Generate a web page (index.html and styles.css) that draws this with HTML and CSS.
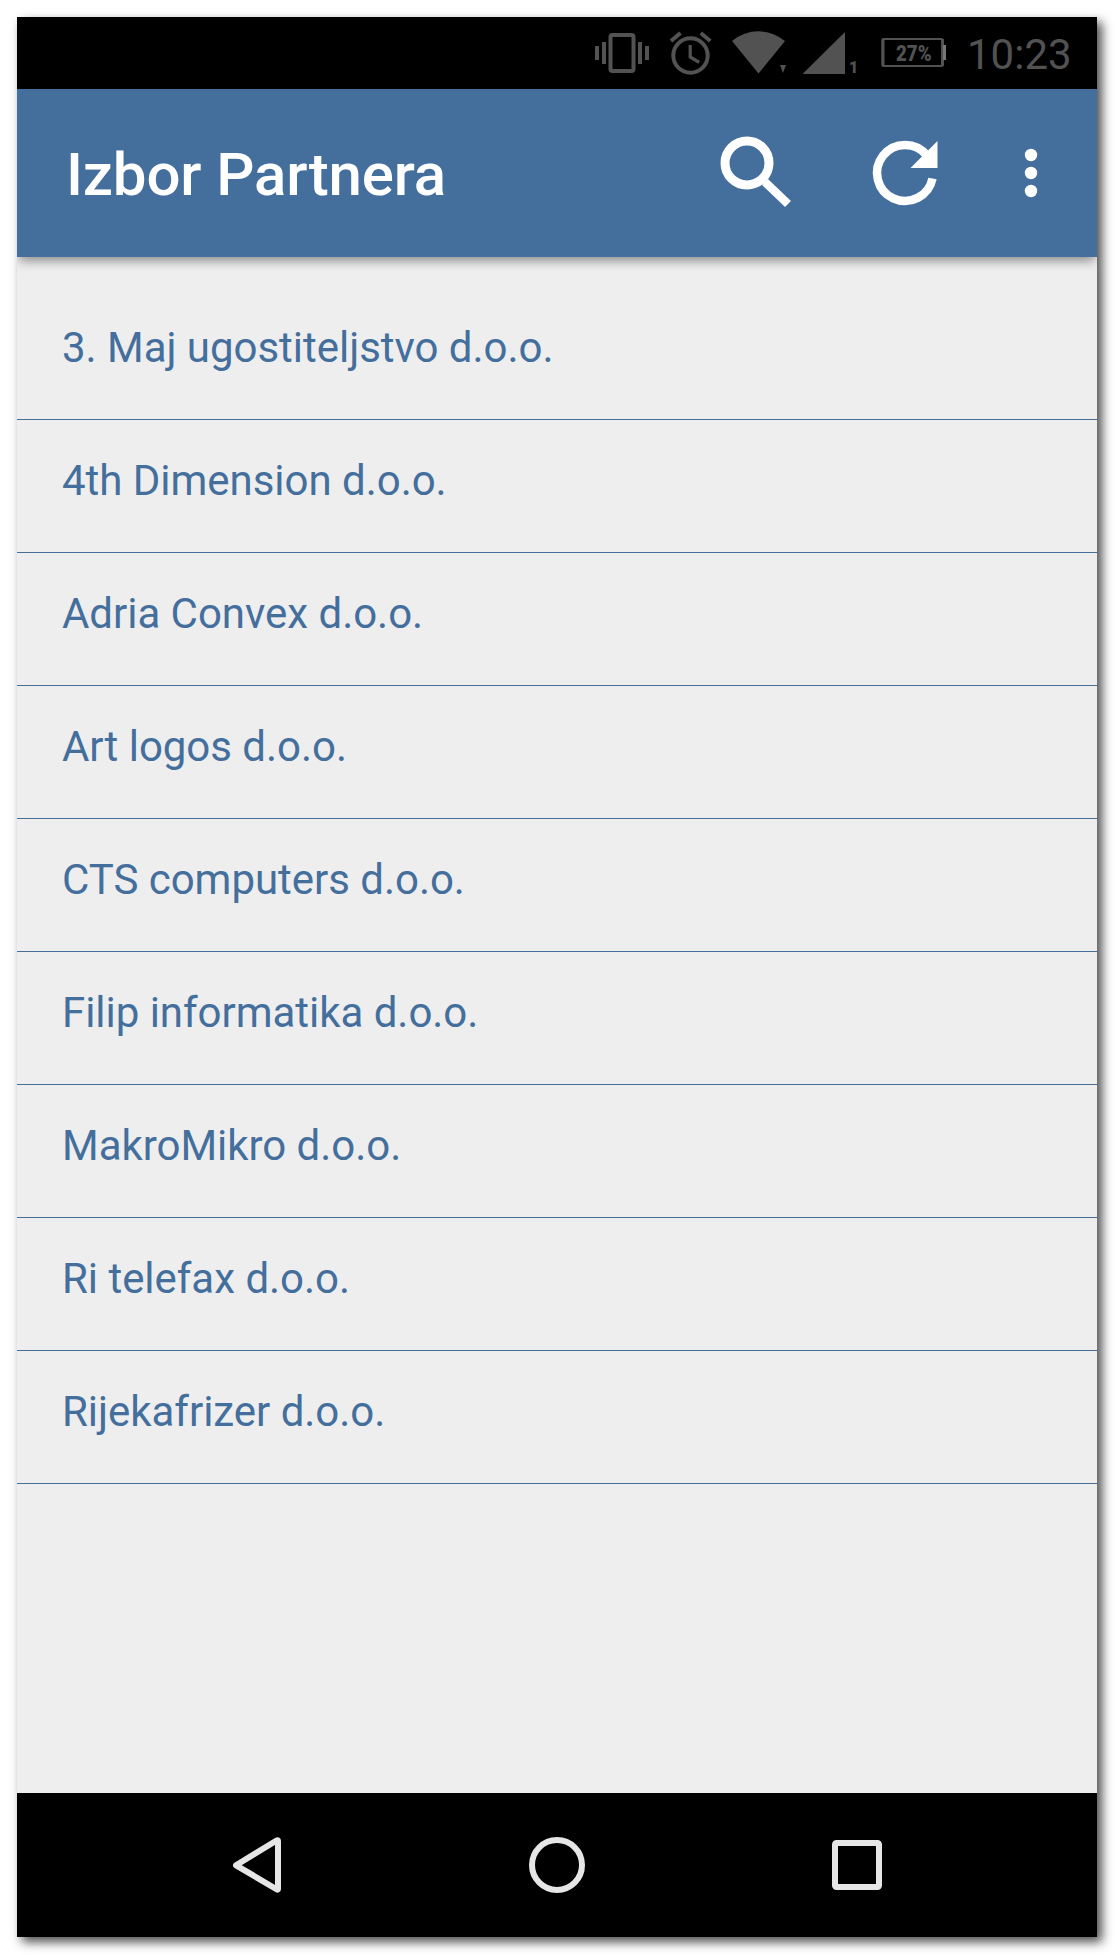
FILE: index.html
```html
<!DOCTYPE html>
<html lang="hr">
<head>
<meta charset="utf-8">
<title>Izbor Partnera</title>
<link rel="stylesheet" href="styles.css">
</head>
<body>
<div class="phone">
  <div class="status-bar">
    <svg width="70" height="72" viewBox="590 17 70 72" fill="#525252">
      <path d="M595 46h4v14h-4zM602 42h4v22h-4zM638 42h4v22h-4zM645 46h4v14h-4z"/>
      <rect x="610.5" y="35" width="23" height="36" rx="2" fill="none" stroke="#525252" stroke-width="4"/>
    </svg>
    <svg width="62" height="72" viewBox="660 17 62 72" fill="none" stroke="#525252" stroke-width="4">
      <circle cx="690.5" cy="55.5" r="17.2"/>
      <path d="M671 41l9.500-8M710.300 41l-9.500-8"/>
      <path d="M690.200 45v12l9 5.300" stroke-width="3.200"/>
    </svg>
    <svg width="72" height="72" viewBox="722 17 72 72" fill="#525252">
      <path d="M732 41Q744 31.300 758.500 31.300T785 41L758.500 73.500z"/>
      <path d="M780 65h6l-3 8z"/>
    </svg>
    <svg width="76" height="72" viewBox="794 17 76 72" fill="#525252">
      <path d="M845 32v42h-42.500z"/>
      <text class="sim-number" x="849" y="73">1</text>
    </svg>
    <svg width="90" height="72" viewBox="870 17 90 72" fill="#525252">
      <rect x="882.500" y="39" width="60" height="27" rx="1" fill="none" stroke="#525252" stroke-width="2"/>
      <path d="M881.500 39h3v27h-3zM941 39h3v27h-3z"/>
      <path d="M943 45h3v15h-3z" fill="#777"/>
      <text class="battery-level" x="896" y="61" textLength="35.500" lengthAdjust="spacingAndGlyphs">27%</text>
    </svg>
    <span class="clock">10:23</span>
  </div>
  <header class="app-bar">
    <h1 class="title">Izbor Partnera</h1>
    <svg width="144" height="168" viewBox="685 89 144 168" fill="none" stroke="#fff">
      <circle cx="747" cy="163" r="22" stroke-width="9"/>
      <path d="M765 182l23 22" stroke-width="8.500"/>
    </svg>
    <svg width="144" height="168" viewBox="829 89 144 168" fill="none" stroke="#fff">
      <path d="M927 155.500A28 28 0 1 0 932.500 178.500" stroke-width="8.500"/>
      <path d="M937.500 141v27h-27z" fill="#fff" stroke="none"/>
    </svg>
    <svg width="124" height="168" viewBox="973 89 124 168" fill="#fff">
      <circle cx="1031" cy="155" r="6.200"/>
      <circle cx="1031" cy="173" r="6.200"/>
      <circle cx="1031" cy="191" r="6.200"/>
    </svg>
  </header>
  <main class="content">
    <ul class="partners">
      <li class="partner">3. Maj ugostiteljstvo d.o.o.</li>
      <li class="partner">4th Dimension d.o.o.</li>
      <li class="partner">Adria Convex d.o.o.</li>
      <li class="partner">Art logos d.o.o.</li>
      <li class="partner">CTS computers d.o.o.</li>
      <li class="partner">Filip informatika d.o.o.</li>
      <li class="partner">MakroMikro d.o.o.</li>
      <li class="partner">Ri telefax d.o.o.</li>
      <li class="partner">Rijekafrizer d.o.o.</li>
    </ul>
  </main>
  <nav class="nav-bar">
    <svg width="300" height="144" viewBox="107 1793 300 144">
      <path d="M236 1865.300L277 1840.300Q278 1840 278 1841V1889Q278 1890 277 1889.500z"/>
    </svg>
    <svg width="300" height="144" viewBox="407 1793 300 144">
      <circle cx="557" cy="1865" r="25"/>
    </svg>
    <svg width="300" height="144" viewBox="707 1793 300 144">
      <rect x="835" y="1843" width="44" height="44" rx="1.500"/>
    </svg>
  </nav>
</div>
</body>
</html>
```
FILE: styles.css
```css
* {
  box-sizing: border-box;
}

body {
  margin: 0;
  padding: 17px 18px 18px 17px;
  background: #fff;
  font-family: Roboto, "Liberation Sans", sans-serif;
  overflow: hidden;
}

svg {
  display: block;
  flex: none;
}

.phone {
  display: flex;
  flex-direction: column;
  width: 1080px;
  height: 1920px;
  background: #eee;
  box-shadow: 5px 5px 10px rgba(0, 0, 0, 0.7);
}

.status-bar {
  display: flex;
  height: 72px;
  padding-left: 573px;
  background: #000;
}

.sim-number {
  font-size: 16px;
  font-weight: 900;
}

.battery-level {
  font-size: 22px;
  font-weight: 900;
}

.clock {
  padding-left: 7px;
  color: #525252;
  font-size: 42px;
  line-height: 76px;
}

.app-bar {
  display: flex;
  z-index: 1;
  height: 168px;
  background: #446f9d;
  box-shadow: 0 6px 10px -2px rgba(0, 0, 0, 0.4);
  clip-path: inset(0 0 -20px 0);
}

.title {
  width: 668px;
  margin: 0;
  padding-left: 49px;
  color: #fff;
  font-size: 60px;
  font-weight: 500;
  letter-spacing: -0.15px;
  line-height: 172px;
  white-space: nowrap;
}

.content {
  flex: 1;
  padding-top: 30px;
}

.partners {
  margin: 0;
  padding: 0;
  list-style: none;
}

.partner {
  height: 133px;
  padding: 36px 45px 0;
  border-bottom: 1px solid #446f96;
  color: #446f9d;
  font-size: 42px;
  letter-spacing: -0.03px;
  line-height: 49px;
}

.nav-bar {
  display: flex;
  justify-content: center;
  height: 144px;
  background: #000;
}

.nav-bar svg {
  fill: none;
  stroke: #e6e6e6;
  stroke-width: 6px;
  stroke-linejoin: round;
}
```
